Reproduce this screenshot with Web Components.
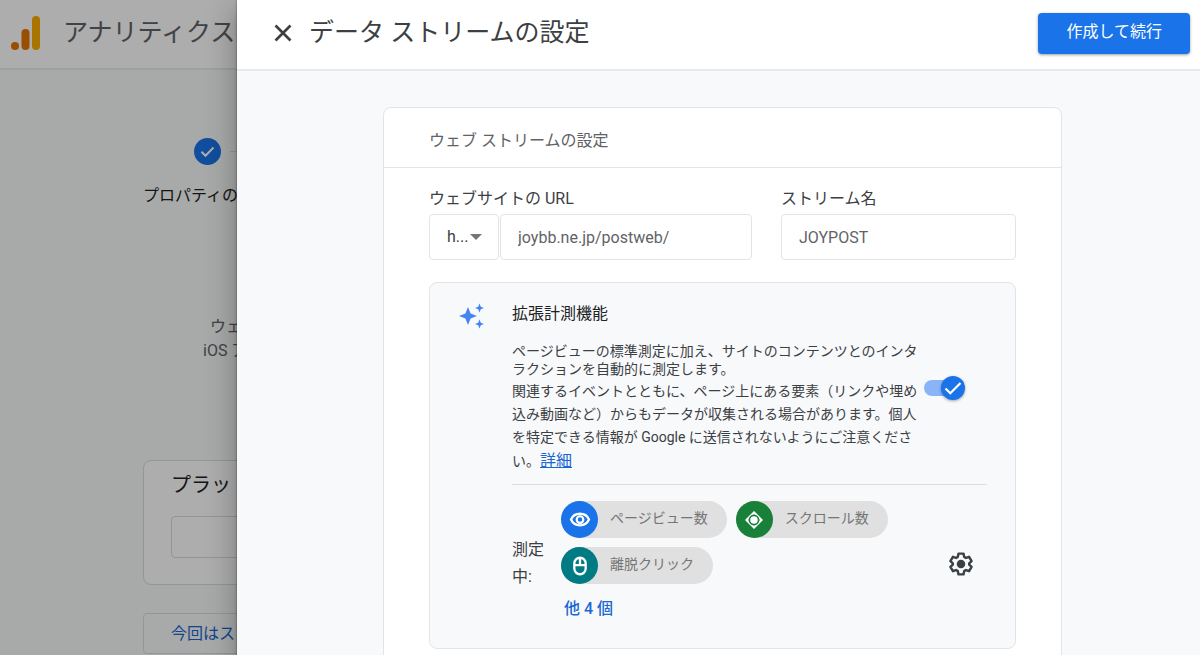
<!DOCTYPE html>
<html lang="ja">
<head>
<meta charset="utf-8">
<title>データ ストリームの設定</title>
<style>
html, body { height: 100%; margin: 0; }
body { overflow: hidden; font: 16px/24px Roboto, "Noto Sans CJK JP", sans-serif; color: #3c4043; background: #f8f9fa; }
</style>
</head>
<body>
<ga-app></ga-app>

<template id="app">
<style>
:host { display: block; position: relative; height: 100vh; overflow: hidden; }
.scrim { position: absolute; inset: 0; background: rgba(0,0,0,.32); }
ga-drawer { position: absolute; inset: 0 0 0 237px; }
</style>
<ga-setup-page></ga-setup-page>
<div class="scrim"></div>
<ga-drawer>
  <span slot="title">データ ストリームの設定</span>
  <span slot="action">作成して続行</span>
  <ga-stream-card></ga-stream-card>
</ga-drawer>
</template>

<template id="setup-page">
<style>
:host { display: block; height: 100%; overflow: hidden; white-space: nowrap; }
header { display: flex; align-items: center; gap: 23px; box-sizing: border-box; height: 70px; padding: 0 0 2px 11px; background: #fff; border-bottom: 2px solid #e8eaed; color: #5f6368; font-size: 25px; line-height: 32px; }
header svg { width: 29px; height: 34px; }
main { padding: 68px 0 0 143px; }
.marks { display: flex; align-items: center; gap: 9px; margin-left: 51px; }
.marks svg { width: 27px; height: 27px; flex: none; }
.marks i { width: 160px; border-top: 1px solid #dadce0; }
.step { margin-top: 19px; color: #202124; }
.lead { margin: 107px 0 0 60px; color: #5f6368; line-height: 24px; }
.lead span { display: block; }
.lead span:first-child { margin-left: 7px; }
section { box-sizing: border-box; width: 860px; height: 125px; margin-top: 97px; padding: 12px 27px; background: #fff; border: 1px solid #dadce0; border-radius: 8px; }
h2 { margin: 0; font-size: 20px; font-weight: 400; line-height: 24px; color: #202124; }
.choice { display: block; box-sizing: border-box; width: 240px; height: 42px; margin-top: 19px; background: #fff; border: 1px solid #dadce0; border-radius: 4px; }
.skip { display: block; box-sizing: border-box; width: 180px; height: 41px; margin-top: 28px; padding: 0 27px; text-align: left; background: none; border: 1px solid #dadce0; border-radius: 4px; font: inherit; line-height: 36px; color: #1967d2; }
</style>
<header>
  <svg viewBox="0 0 29 34" aria-hidden="true"><rect x="21" y="0" width="8" height="34" rx="4" fill="#f9ab00"/><rect x="10.500" y="13" width="8" height="21" rx="4" fill="#e37400"/><circle cx="4" cy="30" r="4" fill="#e37400"/></svg>
  <span>アナリティクス</span>
</header>
<main>
  <div class="marks"><svg viewBox="0 0 27 27" aria-hidden="true"><circle cx="13.500" cy="13.500" r="13.500" fill="#1a73e8"/><path d="M7.500 13.800l4 4 8-8.300" fill="none" stroke="#fff" stroke-width="2"/></svg><i></i></div>
  <div class="step">プロパティの</div>
  <div class="lead"><span>ウェ</span><span>iOS ア</span></div>
  <section><h2>プラット</h2><button class="choice" aria-label="プラットフォーム"></button></section>
  <button class="skip">今回はスキ</button>
</main>
</template>

<template id="drawer">
<style>
:host { display: flex; flex-direction: column; background: #f8f9fb; box-shadow: 0 8px 10px -5px rgba(0,0,0,.2), 0 16px 24px 2px rgba(0,0,0,.14), 0 6px 30px 5px rgba(0,0,0,.12), 0 0 2px rgba(0,0,0,.5); }
header { display: flex; align-items: center; flex: none; box-sizing: border-box; height: 71px; padding: 0 10px 3px 36px; background: #fff; border-bottom: 2px solid #e8eaed; }
.close { display: grid; place-items: center; width: 20px; height: 20px; padding: 0; border: 0; background: none; }
.close svg { width: 18px; height: 18px; }
h1 { flex: 1; margin: 0 0 0 16px; font-size: 25px; font-weight: 400; line-height: 32px; color: #3c4043; }
.go { height: 41px; padding: 0 28px 2px; border: 0; border-radius: 4px; background: #1a73e8; color: #fff; font: inherit; box-shadow: 0 1px 3px rgba(60,64,67,.5); }
.body { flex: 1; min-height: 0; overflow: hidden; padding: 36px 138px 0 146px; }
</style>
<header>
  <button class="close" aria-label="閉じる"><svg viewBox="0 0 18 18"><path d="M1.500 1.500l15 15M16.500 1.500l-15 15" fill="none" stroke="#3c4043" stroke-width="2.700"/></svg></button>
  <h1><slot name="title"></slot></h1>
  <button class="go"><slot name="action"></slot></button>
</header>
<div class="body"><slot></slot></div>
</template>

<template id="stream-card">
<style>
:host { display: block; background: #fff; border: 1px solid #e2e4e7; border-radius: 8px; }
h2 { margin: 0; padding: 21px 45px 14px; border-bottom: 1px solid #e2e4e7; font-size: 16px; font-weight: 400; line-height: 24px; color: #5f6368; }
.content { padding: 19px 45px 46px; }
.fields { display: grid; grid-template-columns: 323fr 235fr; gap: 29px; margin-bottom: 22px; }
label { display: block; margin-bottom: 3px; color: #3c4043; }
.row { display: flex; gap: 1px; }
.pick { position: relative; flex: none; width: 70px; }
.pick svg { position: absolute; right: 17px; top: 20px; width: 12px; height: 6px; pointer-events: none; }
select, input { box-sizing: border-box; width: 100%; min-width: 0; height: 46px; margin: 0; padding: 0 18px 0 17px; appearance: none; border: 1px solid #e2e4e7; border-radius: 4px; background: #fff; font: inherit; color: #5f6368; outline: 0; }
select { padding: 0 0 0 17px; color: #3c4043; }
</style>
<h2>ウェブ ストリームの設定</h2>
<div class="content">
  <div class="fields">
    <div><label for="url">ウェブサイトの URL</label>
      <div class="row"><div class="pick"><select aria-label="プロトコル"><option>h...</option></select><svg viewBox="0 0 12 6"><path d="M0 0h12L6 6z" fill="#757575"/></svg></div><input id="url" value="joybb.ne.jp/postweb/"></div></div>
    <div><label for="name">ストリーム名</label><input id="name" value="JOYPOST"></div>
  </div>
  <ga-measurement></ga-measurement>
</div>
</template>

<template id="measurement">
<style>
:host { display: grid; grid-template-columns: 28px minmax(0, 1fr); gap: 26px; padding: 18px 28px 22px; background: #f8f9fb; border: 1px solid #e2e4e7; border-radius: 8px; }
.spark { width: 28px; height: 28px; }
h3 { margin: 0 0 16px; padding-top: 1px; font-size: 16px; font-weight: 400; line-height: 24px; color: #202124; }
.about { display: flex; align-items: flex-start; gap: 4px; padding-right: 22px; }
ga-toggle { margin-top: 34px; }
.copy { flex: 1; font-size: 14px; }
p { margin: 0; line-height: 18px; }
p + p { margin-top: 2px; line-height: 23px; }
a { color: #1967d2; font-size: 16px; }
hr { margin: 11px 0 16px; border: 0; border-top: 1px solid #dadce0; }
.active { display: flex; align-items: center; }
.caption { flex: none; width: 40px; margin-right: 9px; padding-bottom: 2px; line-height: 27px; }
.list { flex: 1; display: flex; flex-wrap: wrap; gap: 9px; }
.more { flex-basis: 100%; padding: 4px 0 5px 3px; }
.more a { text-decoration: none; font-weight: 500; }
.gear { flex: none; width: 26px; height: 26px; margin: 0 13px 0 0; padding: 0; border: 0; background: none; }
.gear svg { display: block; width: 26px; height: 26px; }
</style>
<svg class="spark" viewBox="0 0 28 28" aria-hidden="true"><g fill="#4285f4"><path d="M10 6l2.600 6.400L19 15l-6.400 2.600L10 24l-2.600-6.400L1 15l6.400-2.600z"/><path d="M21.500 2.500l1.300 3.200L26 7l-3.200 1.300-1.300 3.200-1.300-3.200L17 7l3.200-1.300z"/><path d="M21.500 18.500l1.300 3.200L26 23l-3.200 1.300-1.300 3.200-1.300-3.200L17 23l3.200-1.300z"/></g></svg>
<div>
  <h3>拡張計測機能</h3>
  <div class="about">
    <div class="copy">
      <p>ページビューの標準測定に加え、サイトのコンテンツとのインタラクションを自動的に測定します。</p>
      <p>関連するイベントとともに、ページ上にある要素（リンクや埋め込み動画など）からもデータが収集される場合があります。個人を特定できる情報が Google に送信されないようにご注意ください。<a href="#details">詳細</a></p>
    </div>
    <ga-toggle></ga-toggle>
  </div>
  <hr>
  <div class="active">
    <div class="caption">測定中:</div>
    <div class="list">
      <ga-chip style="--tone:#1a73e8"><svg slot="icon" width="22" height="22" viewBox="0 0 24 24"><path d="M2.200 11.500C3.900 7.600 7.600 5.200 12 5.200s8.100 2.400 9.800 6.300c-1.700 3.900-5.400 6.300-9.800 6.300s-8.100-2.400-9.800-6.300z" fill="none" stroke="#fff" stroke-width="2.500"/><circle cx="12" cy="11.500" r="3.600" fill="none" stroke="#fff" stroke-width="2.400"/></svg>ページビュー数</ga-chip>
      <ga-chip style="--tone:#188038"><svg slot="icon" width="22" height="22" viewBox="0 0 24 24"><path d="M12 4l8 8-8 8-8-8z" fill="none" stroke="#fff" stroke-width="2.600"/><circle cx="12" cy="12" r="5" fill="#fff" stroke="var(--tone)" stroke-width="1.800"/></svg>スクロール数</ga-chip>
      <ga-chip style="--tone:#007b83"><svg slot="icon" width="22" height="22" viewBox="0 0 24 24"><path d="M5.800 9.200a6.200 6.200 0 0112.400 0v5.600a6.200 6.200 0 01-12.400 0zM6 11h12M12 3v8" fill="none" stroke="#fff" stroke-width="2.500"/></svg>離脱クリック</ga-chip>
      <div class="more"><a href="#more">他 4 個</a></div>
    </div>
    <button class="gear" aria-label="設定"><svg viewBox="0 0 28 28" fill="none" stroke="#3c4043" stroke-width="2.600" stroke-linejoin="round"><path d="M11.300 2.800h5.400l.7 3.500 2 1.200 3.300-1.200 2.700 4.700-2.600 2.400v1.200l2.600 2.400-2.700 4.700-3.300-1.200-2 1.200-.7 3.500h-5.400l-.7-3.500-2-1.200-3.300 1.200-2.700-4.700 2.600-2.400v-1.200l-2.600-2.400 2.700-4.700 3.300 1.200 2-1.200z"/><circle cx="14" cy="14" r="4.600" fill="#3c4043" stroke="none"/></svg></button>
  </div>
</div>
</template>

<template id="toggle">
<style>
:host { display: block; }
label { position: relative; display: grid; align-items: center; width: 41px; height: 24px; }
input { appearance: none; width: 36px; height: 16px; margin: 0; border-radius: 8px; background: #dadce0; }
input:checked { background: #8ab4f8; }
svg { position: absolute; right: 0; top: 0; width: 24px; height: 24px; border-radius: 50%; background: #1a73e8; box-shadow: 0 1px 3px rgba(0,0,0,.35); pointer-events: none; }
</style>
<label><input type="checkbox" checked aria-label="拡張計測機能"><svg viewBox="0 0 24 24"><path d="M4.500 12.500l4.800 4.800L19.500 7" fill="none" stroke="#fff" stroke-width="2.200"/></svg></label>
</template>

<template id="chip">
<style>
:host { display: flex; align-items: center; height: 37px; padding-right: 19px; border-radius: 19px; background: #e0e0e0; color: #757575; font-size: 14px; line-height: 20px; white-space: nowrap; }
.disc { display: grid; place-items: center; width: 37px; height: 37px; margin-right: 12px; border-radius: 50%; background: var(--tone); }
.text { padding-bottom: 3px; }
</style>
<span class="disc"><slot name="icon"></slot></span><span class="text"><slot></slot></span>
</template>

<script>
for (const name of ["app", "setup-page", "drawer", "stream-card", "measurement", "toggle", "chip"]) {
  customElements.define("ga-" + name, class extends HTMLElement {
    constructor() {
      super();
      this.attachShadow({ mode: "open" }).append(document.getElementById(name).content.cloneNode(true));
    }
  });
}
</script>
</body>
</html>
